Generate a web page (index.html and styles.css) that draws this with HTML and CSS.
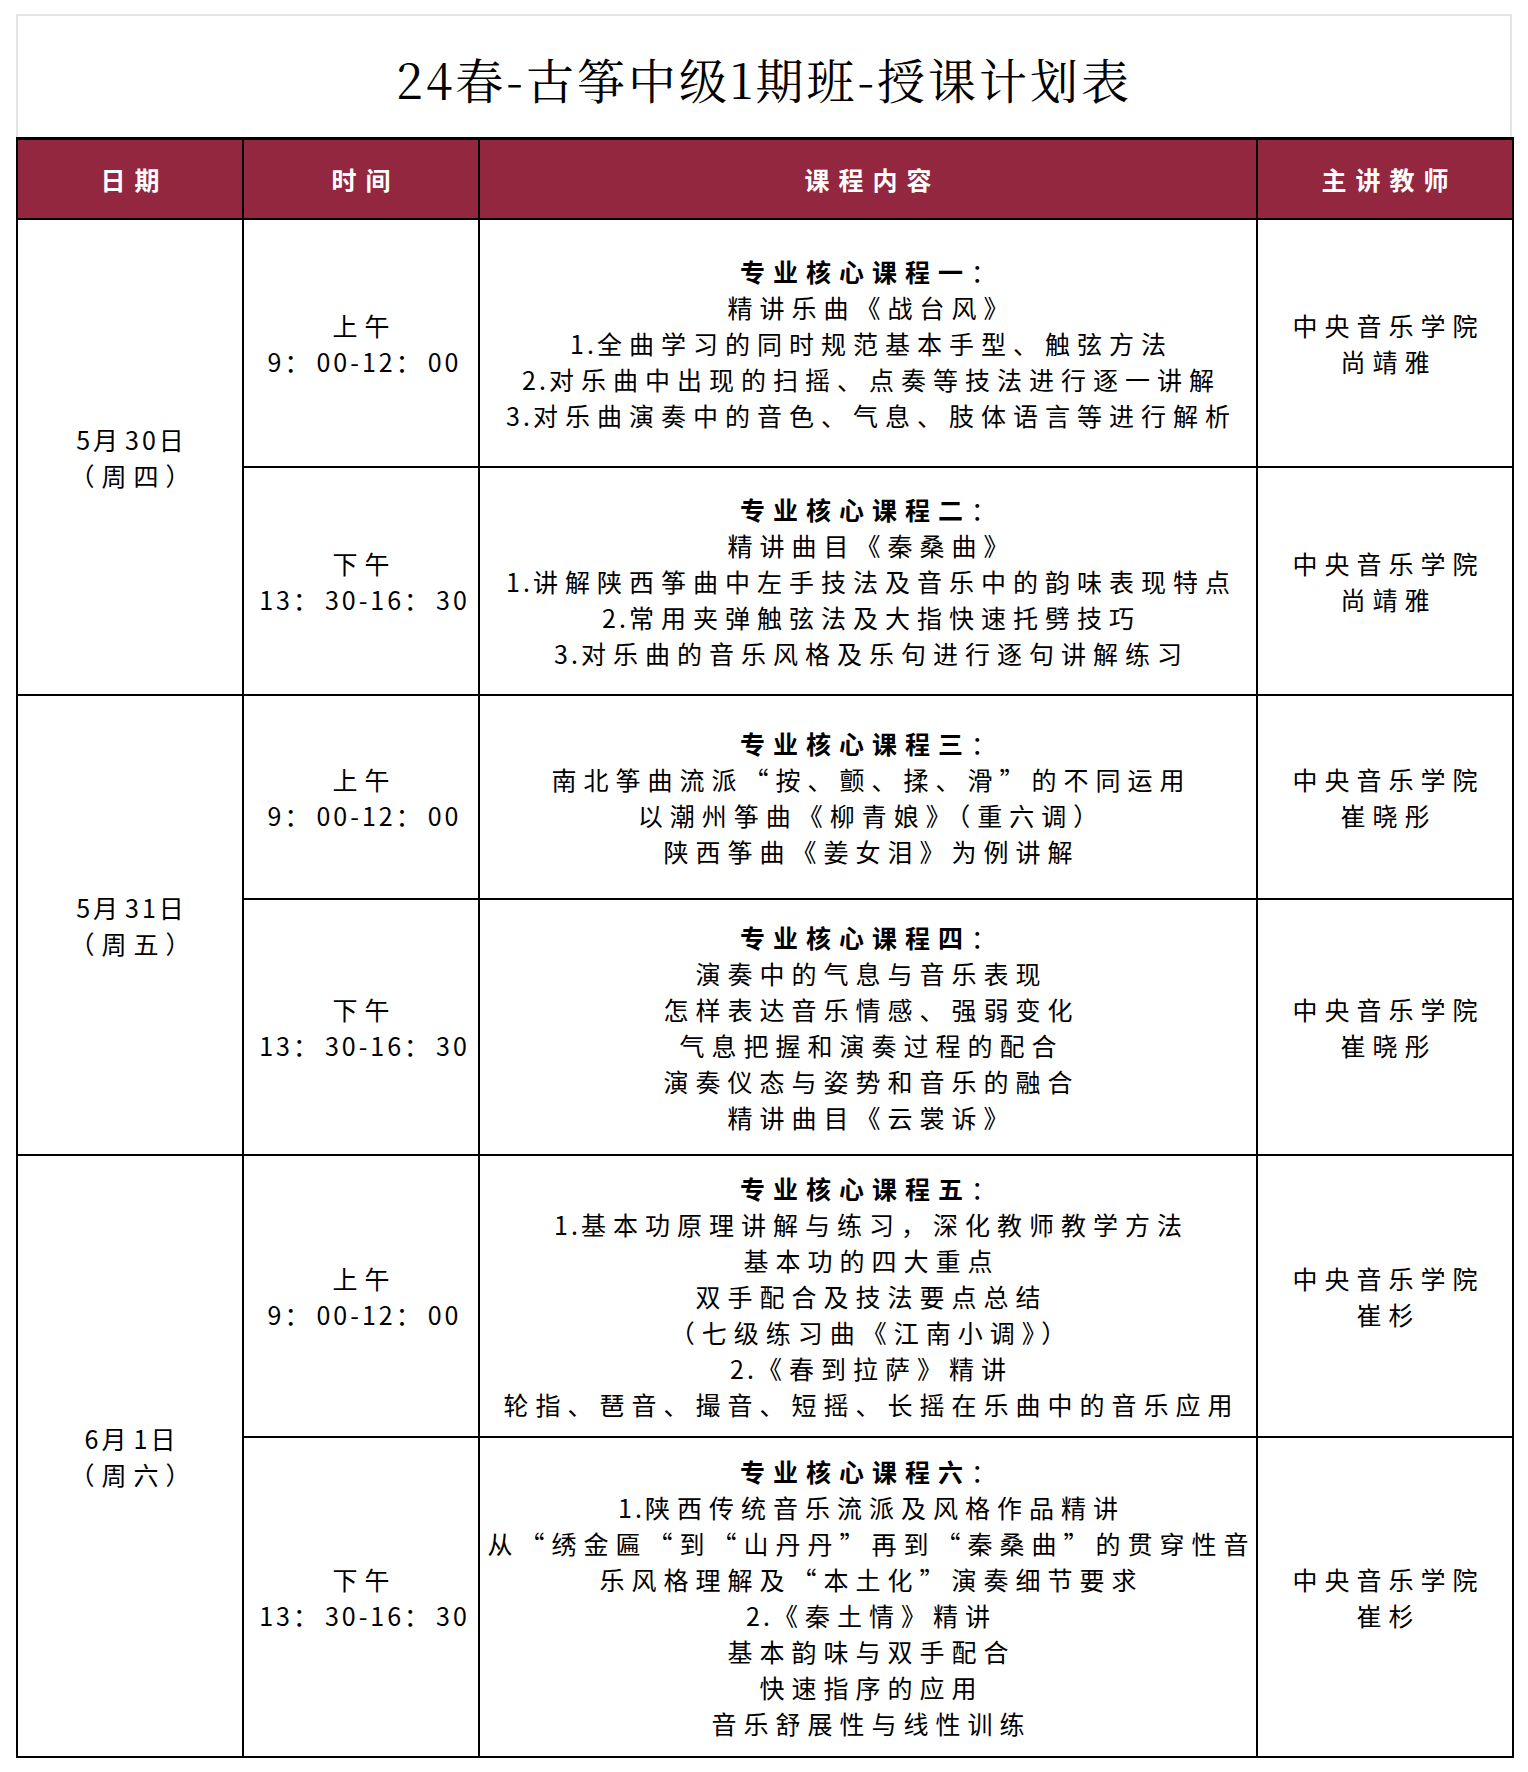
FILE: index.html
```html
<!DOCTYPE html>
<html lang="zh-CN">
<head>
<meta charset="utf-8">
<title>24春-古筝中级1期班-授课计划表</title>
<link rel="stylesheet" href="styles.css">
</head>
<body>
<div class="page">
  <div class="title">24春-古筝中级1期班-授课计划表</div>
  <table class="plan">
    <colgroup>
      <col class="c-date">
      <col class="c-time">
      <col class="c-content">
      <col class="c-teacher">
    </colgroup>
    <thead>
      <tr class="head">
        <th>日期</th>
        <th>时间</th>
        <th>课程内容</th>
        <th>主讲教师</th>
      </tr>
    </thead>
    <tbody>
      <tr class="r1">
        <td class="date" rowspan="2"><div><span class="n">5</span>月<span class="n">30</span>日</div><div>（周四）</div></td>
        <td class="time"><div>上午</div><div><span class="n">9</span>：<span class="n">00-12</span>：<span class="n">00</span></div></td>
        <td class="content">
          <div><b>专业核心课程一</b>：</div>
          <div>精讲乐曲《战台风》</div>
          <div><span class="n">1.</span>全曲学习的同时规范基本手型、触弦方法</div>
          <div><span class="n">2.</span>对乐曲中出现的扫摇、点奏等技法进行逐一讲解</div>
          <div><span class="n">3.</span>对乐曲演奏中的音色、气息、肢体语言等进行解析</div>
        </td>
        <td class="teacher"><div>中央音乐学院</div><div>尚靖雅</div></td>
      </tr>
      <tr class="r2">
        <td class="time"><div>下午</div><div><span class="n">13</span>：<span class="n">30-16</span>：<span class="n">30</span></div></td>
        <td class="content">
          <div><b>专业核心课程二</b>：</div>
          <div>精讲曲目《秦桑曲》</div>
          <div><span class="n">1.</span>讲解陕西筝曲中左手技法及音乐中的韵味表现特点</div>
          <div><span class="n">2.</span>常用夹弹触弦法及大指快速托劈技巧</div>
          <div><span class="n">3.</span>对乐曲的音乐风格及乐句进行逐句讲解练习</div>
        </td>
        <td class="teacher"><div>中央音乐学院</div><div>尚靖雅</div></td>
      </tr>
      <tr class="r3">
        <td class="date" rowspan="2"><div><span class="n">5</span>月<span class="n">31</span>日</div><div>（周五）</div></td>
        <td class="time"><div>上午</div><div><span class="n">9</span>：<span class="n">00-12</span>：<span class="n">00</span></div></td>
        <td class="content">
          <div><b>专业核心课程三</b>：</div>
          <div>南北筝曲流派“按、颤、揉、滑”的不同运用</div>
          <div>以潮州筝曲《柳青娘》（重六调）</div>
          <div>陕西筝曲《姜女泪》为例讲解</div>
        </td>
        <td class="teacher"><div>中央音乐学院</div><div>崔晓彤</div></td>
      </tr>
      <tr class="r4">
        <td class="time"><div>下午</div><div><span class="n">13</span>：<span class="n">30-16</span>：<span class="n">30</span></div></td>
        <td class="content">
          <div><b>专业核心课程四</b>：</div>
          <div>演奏中的气息与音乐表现</div>
          <div>怎样表达音乐情感、强弱变化</div>
          <div>气息把握和演奏过程的配合</div>
          <div>演奏仪态与姿势和音乐的融合</div>
          <div>精讲曲目《云裳诉》</div>
        </td>
        <td class="teacher"><div>中央音乐学院</div><div>崔晓彤</div></td>
      </tr>
      <tr class="r5">
        <td class="date" rowspan="2"><div><span class="n">6</span>月<span class="n">1</span>日</div><div>（周六）</div></td>
        <td class="time"><div>上午</div><div><span class="n">9</span>：<span class="n">00-12</span>：<span class="n">00</span></div></td>
        <td class="content">
          <div><b>专业核心课程五</b>：</div>
          <div><span class="n">1.</span>基本功原理讲解与练习，深化教师教学方法</div>
          <div>基本功的四大重点</div>
          <div>双手配合及技法要点总结</div>
          <div>（七级练习曲《江南小调》）</div>
          <div><span class="n">2.</span>《春到拉萨》精讲</div>
          <div>轮指、琶音、撮音、短摇、长摇在乐曲中的音乐应用</div>
        </td>
        <td class="teacher"><div>中央音乐学院</div><div>崔杉</div></td>
      </tr>
      <tr class="r6">
        <td class="time"><div>下午</div><div><span class="n">13</span>：<span class="n">30-16</span>：<span class="n">30</span></div></td>
        <td class="content">
          <div><b>专业核心课程六</b>：</div>
          <div><span class="n">1.</span>陕西传统音乐流派及风格作品精讲</div>
          <div>从“绣金匾“到“山丹丹”再到“秦桑曲”的贯穿性音</div>
          <div>乐风格理解及“本土化”演奏细节要求</div>
          <div><span class="n">2.</span>《秦土情》精讲</div>
          <div>基本韵味与双手配合</div>
          <div>快速指序的应用</div>
          <div>音乐舒展性与线性训练</div>
        </td>
        <td class="teacher"><div>中央音乐学院</div><div>崔杉</div></td>
      </tr>
    </tbody>
  </table>
</div>
</body>
</html>
```

FILE: styles.css
```css
html, body {
  margin: 0;
  padding: 0;
  background: #ffffff;
}

body {
  font-family: "Noto Sans CJK SC", "Noto Sans", sans-serif;
  color: #000000;
}

.page {
  width: 1496px;
  padding: 14px 16px 16px 16px;
}

.title {
  box-sizing: border-box;
  height: 123px;
  border: 2px solid #e4e4e4;
  border-bottom: none;
  display: flex;
  align-items: center;
  justify-content: center;
  padding-top: 4px;
  font-family: "Noto Serif CJK SC", "Liberation Serif", "Noto Sans CJK SC", serif;
  font-size: 48px;
  font-weight: normal;
  letter-spacing: 3px;
  white-space: nowrap;
}

.plan {
  width: 1496px;
  border-collapse: collapse;
  table-layout: fixed;
}

.c-date { width: 226px; }
.c-time { width: 236px; }
.c-content { width: 778px; }
.c-teacher { width: 256px; }

.plan th {
  height: 78px;
  background: #93273f;
  color: #ffffff;
  font-size: 25px;
  font-weight: bold;
  letter-spacing: 9px;
  padding: 0 0 0 9px;
  border: 2px solid #000000;
  border-top-width: 3px;
  text-align: center;
  vertical-align: middle;
  white-space: nowrap;
}

.plan td {
  border: 2px solid #000000;
  text-align: center;
  vertical-align: middle;
  font-size: 25px;
  line-height: 36px;
  letter-spacing: 7px;
  padding: 0 0 0 7px;
  white-space: nowrap;
}

.plan td.content b {
  font-weight: bold;
  letter-spacing: 8px;
}

.n {
  letter-spacing: 3px;
}

.r1 { height: 248px; }
.r2 { height: 228px; }
.r3 { height: 204px; }
.r4 { height: 256px; }
.r5 { height: 282px; }
.r6 { height: 320px; }
```
